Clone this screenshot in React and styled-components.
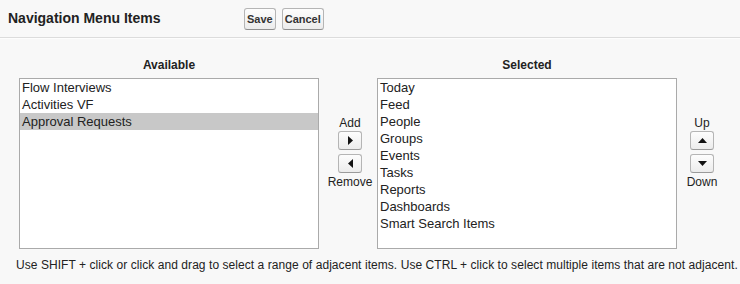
import * as React from "react"
import styled, { createGlobalStyle } from "styled-components"

const GlobalStyle = createGlobalStyle`
  body {
    margin: 0;
    padding: 0;
    background: #f8f8f8;
    font-family: "Liberation Sans", Arial, sans-serif;
    color: #222;
  }
`

const Page = styled.div`
  width: 740px;
  height: 284px;
  overflow: hidden;
`

const Header = styled.div`
  display: flex;
  align-items: center;
  height: 37px;
  padding-left: 8px;
  border-bottom: 1px solid #dcdcdc;
  box-shadow: 0 1px 0 #fdfdfd;
`

const Title = styled.h1`
  flex: 0 0 236px;
  margin: 0 0 1px;
  font-size: 14px;
  font-weight: bold;
  color: #222;
`

const Btn = styled.button`
  height: 22px;
  margin-right: 6px;
  padding: 0 2px;
  font-family: "Liberation Sans", Arial, sans-serif;
  font-size: 11px;
  font-weight: bold;
  color: #333;
  background: linear-gradient(#fdfdfd, #ececec);
  border: 1px solid #b5b5b5;
  border-bottom-color: #8f8f8f;
  border-radius: 3px;
  cursor: pointer;
`

const Body = styled.div`
  display: grid;
  grid-template-columns: 300px 58px 300px 48px;
  grid-template-rows: auto auto;
  padding: 20px 0 0 19px;
`

const ColumnHead = styled.div`
  text-align: center;
  font-size: 12px;
  font-weight: bold;
  line-height: 14px;
  height: 20px;
  color: #222;
`

const ListBox = styled.div`
  box-sizing: border-box;
  height: 171px;
  background: #fff;
  border: 1px solid #aaa;
  overflow: hidden;
`

const Item = styled.div`
  height: 17px;
  line-height: 17px;
  padding-left: 2px;
  font-size: 13px;
  color: #222;
  white-space: nowrap;
  background: ${p => (p.$selected ? "#c8c8c8" : "transparent")};
`

const Controls = styled.div`
  display: flex;
  flex-direction: column;
  align-items: center;
  gap: 4px;
  padding: 38px 0 0 ${p => p.$shift || 0}px;
  font-size: 12px;
  color: #222;
`

const CtlLabel = styled.span`
  line-height: 14px;
  margin: ${p => (p.$top ? "0 0 -3px" : "-2px 0 0")};
`

const ArrowBtn = styled.button`
  display: flex;
  align-items: center;
  justify-content: center;
  width: 24px;
  height: 19px;
  padding: 0;
  background: linear-gradient(#fdfdfd, #ececec);
  border: 1px solid #b5b5b5;
  border-bottom-color: #9a9a9a;
  border-radius: 3px;
  cursor: pointer;
`

const Footer = styled.p`
  margin: 9px 0 0 16px;
  font-size: 12px;
  letter-spacing: 0.06px;
  color: #222;
  white-space: nowrap;
`

const Arrow = ({ dir }) => {
  const pts = {
    right: "2,0 7,4.5 2,9",
    left: "7,0 2,4.5 7,9",
    up: "0,7 4.5,2 9,7",
    down: "0,2 4.5,7 9,2",
  }[dir]
  return (
    <svg width="9" height="9" viewBox="0 0 9 9">
      <polygon points={pts} fill="#111" />
    </svg>
  )
}

const available = ["Flow Interviews", "Activities VF", "Approval Requests"]
const selected = [
  "Today",
  "Feed",
  "People",
  "Groups",
  "Events",
  "Tasks",
  "Reports",
  "Dashboards",
  "Smart Search Items",
]

const App = () => (
  <Page>
    <GlobalStyle />
    <Header>
      <Title>Navigation Menu Items</Title>
      <Btn>Save</Btn>
      <Btn>Cancel</Btn>
    </Header>

    <Body>
      <ColumnHead>Available</ColumnHead>
      <div />
      <ColumnHead>Selected</ColumnHead>
      <div />

      <ListBox>
        {available.map(a => (
          <Item key={a} $selected={a === "Approval Requests"}>{a}</Item>
        ))}
      </ListBox>
      <Controls $shift={4}>
        <CtlLabel $top>Add</CtlLabel>
        <ArrowBtn><Arrow dir="right" /></ArrowBtn>
        <ArrowBtn><Arrow dir="left" /></ArrowBtn>
        <CtlLabel>Remove</CtlLabel>
      </Controls>
      <ListBox>
        {selected.map(s => (
          <Item key={s}>{s}</Item>
        ))}
      </ListBox>
      <Controls $shift={2}>
        <CtlLabel $top>Up</CtlLabel>
        <ArrowBtn><Arrow dir="up" /></ArrowBtn>
        <ArrowBtn><Arrow dir="down" /></ArrowBtn>
        <CtlLabel>Down</CtlLabel>
      </Controls>
    </Body>

    <Footer>
      Use SHIFT + click or click and drag to select a range of adjacent items. Use CTRL + click to select multiple items that are not adjacent.
    </Footer>
  </Page>
)

export default App
